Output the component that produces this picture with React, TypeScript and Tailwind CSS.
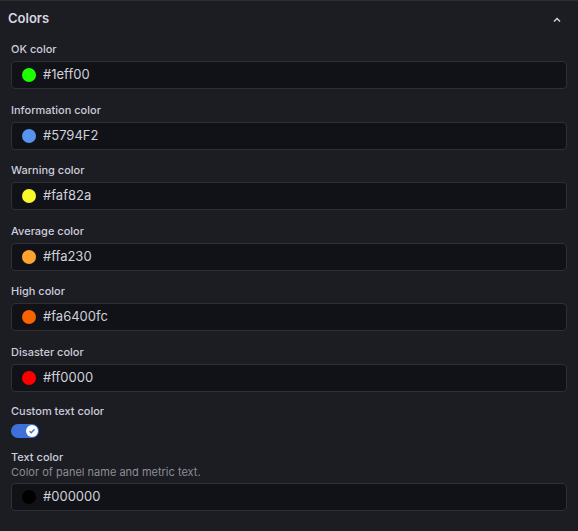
import React from "react";

const rows = [
  { label: "OK color", value: "#1eff00", color: "#1eff00" },
  { label: "Information color", value: "#5794F2", color: "#5794F2" },
  { label: "Warning color", value: "#faf82a", color: "#faf82a" },
  { label: "Average color", value: "#ffa230", color: "#ffa230" },
  { label: "High color", value: "#fa6400fc", color: "#fa6400" },
  { label: "Disaster color", value: "#ff0000", color: "#ff0000" },
];

function ColorInput({ value, color }: { value: string; color: string }) {
  return (
    <div className="flex h-[28px] items-center rounded-[4px] border border-[#2e3036] bg-[#111217] pl-[10px]">
      <span className="h-[14px] w-[14px] rounded-full" style={{ backgroundColor: color }} />
      <span className="ml-[7px] text-[13px] text-[#d0d0da]">{value}</span>
    </div>
  );
}

export default function App() {
  return (
    <div
      className="h-[531px] w-[578px] overflow-hidden border-t border-[#2a2d33] bg-[#1b1d22] text-[#ccccdc]"
      style={{ fontFamily: "Inter, 'Noto Sans', sans-serif" }}
    >
      <div className="flex h-[42px] items-start justify-between pl-[8px] pr-[17px] pt-[9px]">
        <span className="text-[13px] font-semibold leading-[16px] text-[#d8d8e2]">Colors</span>
        <svg width="8" height="6" viewBox="0 0 8 6" className="mt-[7px]">
          <path d="M1 4.5 L4 1.5 L7 4.5" fill="none" stroke="#d0d0da" strokeWidth="1.5" />
        </svg>
      </div>
      <div className="flex flex-col px-[11px]">
        {rows.map((r, i) => (
          <div key={i} className={`flex flex-col ${i === 5 ? "mb-[13px]" : "mb-[14.5px]"}`}>
            <div className="mb-[5px] h-[13px] text-[11px] font-medium leading-[13px] text-[#ccccdc]">{r.label}</div>
            <ColorInput value={r.value} color={r.color} />
          </div>
        ))}
        <div className="mb-[13.5px] flex flex-col">
          <div className="mb-[6px] h-[13px] text-[11px] font-medium leading-[13px]">Custom text color</div>
          <div className="relative h-[14px] w-[28px] rounded-full bg-[#3d71d9]">
            <div className="absolute right-[1px] top-[1px] flex h-[12px] w-[12px] items-center justify-center rounded-full bg-white">
              <svg width="8" height="8" viewBox="0 0 8 8">
                <path d="M1.5 4.2 L3.2 5.8 L6.5 2.3" fill="none" stroke="#3d71d9" strokeWidth="1.3" />
              </svg>
            </div>
          </div>
        </div>
        <div className="flex flex-col">
          <div className="h-[13px] text-[11px] font-medium leading-[13px]">Text color</div>
          <div className="mb-[3px] mt-[1px] text-[11px] leading-[15px] text-[#8b8c96]">Color of panel name and metric text.</div>
          <ColorInput value="#000000" color="#000000" />
        </div>
      </div>
    </div>
  );
}
